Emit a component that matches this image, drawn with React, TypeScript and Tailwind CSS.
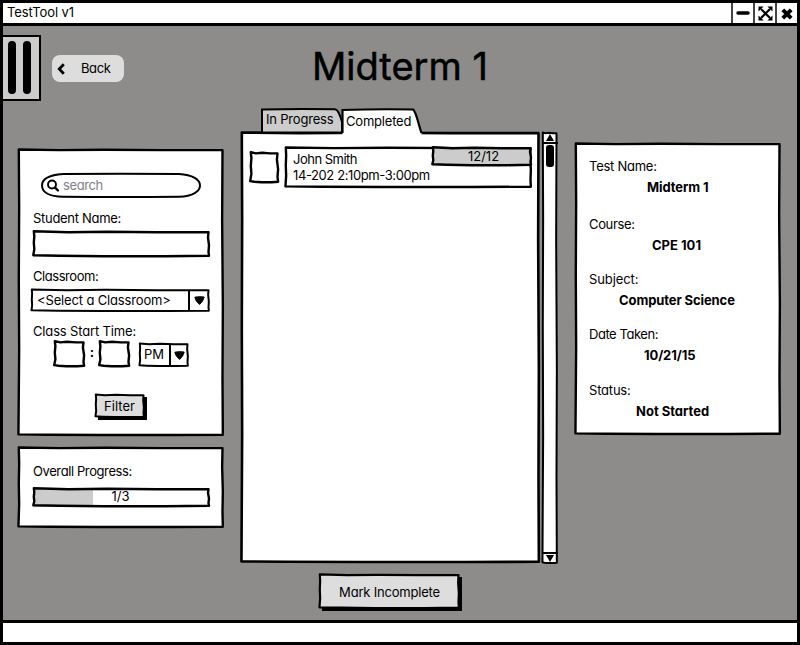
import type { ReactNode } from "react";

type FrameProps = {
  w: number;
  h: number;
  className: string;
  fill?: string;
  stroke?: number;
  wobble?: number;
  shadow?: number;
  children?: ReactNode;
};

/* Hand-drawn rectangle that sits behind its content. */
function Frame({ w, h, className, fill = "#ffffff", stroke = 2.4, wobble = 0.35, shadow = 0, children }: FrameProps) {
  const x = 0.8;
  const y = 0.8;
  const r = w - 1.5;
  const b = h - 1.3;
  const k = wobble;
  const d =
    `M${x} ${y - k} L${w * 0.2} ${y + k} L${w * 0.42} ${y} L${w * 0.7} ${y + k} L${r} ${y + k}` +
    ` L${r - k} ${h * 0.25} L${r + k} ${h * 0.55} L${r} ${h * 0.8} L${r + k} ${b}` +
    ` L${w * 0.75} ${b + k} L${w * 0.4} ${b + k} L${w * 0.15} ${b} L${x - k} ${b - k}` +
    ` L${x + k} ${h * 0.7} L${x} ${h * 0.45} L${x + k} ${h * 0.2} Z`;
  return (
    <div className={`relative isolate shrink-0 ${className}`}>
      <svg className="absolute inset-0 -z-10 overflow-visible" width={w} height={h} aria-hidden="true">
        {shadow > 0 && <rect x={shadow + 1} y={shadow + 1} width={w - 1} height={h - 1} fill="#000" />}
        <path d={d} fill={fill} stroke="#000" strokeWidth={stroke} strokeLinejoin="round" />
      </svg>
      {children}
    </div>
  );
}

function Down() {
  return (
    <svg width="11" height="9" viewBox="0 0 11 9" aria-hidden="true">
      <path d="M.8 1.2 Q5 .2 10.2 1 Q9.400 5 5.700 8.4 Q1.6 5.6 .8 1.2Z" stroke="#000" strokeLinejoin="round" />
    </svg>
  );
}

function Label({ children, tracking = "tracking-[-0.3px]" }: { children: ReactNode; tracking?: string }) {
  return <div className={`h-4 whitespace-nowrap ${tracking}`}>{children}</div>;
}

function Window() {
  return (
    <header className="flex h-[26px] shrink-0 border-t-[3px] border-b-[3px] border-black bg-white">
      <div className="flex-1 pl-1 leading-[19px] tracking-[-0.1px]">TestTool v1</div>
      <div className="flex w-[22px] items-center justify-center border-l-2 border-[#444]">
        <svg width="14" height="4"><path d="M2 2H12" stroke="#000" strokeWidth="3.4" strokeLinecap="round" /></svg>
      </div>
      <div className="flex w-[22px] items-center justify-center border-l-2 border-[#444]">
        <svg width="15" height="15" viewBox="0 0 15 15">
          <path d="M3 3L12 12M12 3L3 12" stroke="#000" strokeWidth="2.2" />
          <path d="M.5 .5H5.6L.5 5.6ZM14.5 .5V5.6L9.4 .5ZM.5 14.5V9.4L5.6 14.5ZM14.5 14.5H9.4L14.5 9.4Z" />
        </svg>
      </div>
      <div className="flex w-[22px] items-center justify-center border-l-2 border-[#444] pt-[2px]">
        <svg width="12" height="12" viewBox="0 0 12 12">
          <path d="M1.800 1.800L10.200 10.200M10.200 1.800L1.800 10.200" stroke="#000" strokeWidth="3.9" />
        </svg>
      </div>
    </header>
  );
}

function Filters() {
  return (
    <Frame w={206} h={287} className="h-[287px] w-[206px] pt-6">
      <div className="ml-[23px] flex h-[26px] w-[160px]">
        <svg className="absolute -z-10 overflow-visible" width="160" height="26" aria-hidden="true">
          <path d="M22 1 Q80 .5 138 1 C152 1.6 159 7 159 12.500 S152 23.500 138 23.800 Q80 24.400 22 23.800 C8 23.500 1 19 1 12.500 S8 2 22 1Z" fill="#fff" stroke="#000" strokeWidth="2" />
        </svg>
        <svg className="mt-[6px] ml-[6px]" width="14" height="14" fill="none" stroke="#000">
          <circle cx="5" cy="5.500" r="4" strokeWidth="1.900" />
          <path d="M8.100 8.700L11 11.500" strokeWidth="2.4" strokeLinecap="round" />
        </svg>
        <span className="ml-[2px] leading-[24px] tracking-[-0.4px] text-[#808088]">search</span>
      </div>
      <div className="mt-[11px] pl-[15px]"><Label>Student Name:</Label></div>
      <Frame w={177} h={26} wobble={0.5} className="mt-[5px] ml-[15px] h-[26px] w-[177px]" />
      <div className="mt-[11px] pl-[15px]"><Label tracking="tracking-[-0.45px]">Classroom:</Label></div>
      <Frame w={179} h={23} stroke={2} className="mt-[5px] ml-[13px] flex h-[23px] w-[179px] items-center">
        <span className="w-[157px] pb-[2px] pl-[6px] tracking-[-0.15px] whitespace-nowrap">&lt;Select a Classroom&gt;</span>
        <span className="flex h-[20px] w-[20px] items-center justify-center border-l-2 border-black pb-px"><Down /></span>
      </Frame>
      <div className="mt-[11px] pl-[15px]"><Label tracking="tracking-[-0.15px]">Class Start Time:</Label></div>
      <div className="mt-[2px] ml-9 flex items-start">
        <Frame w={31} h={26} wobble={0.6} className="h-[26px] w-[31px]" />
        <span className="w-[14px] pt-[3px] text-center font-bold">:</span>
        <Frame w={31} h={26} wobble={0.6} className="h-[26px] w-[31px]" />
        <Frame w={50} h={24} stroke={2} className="mt-[2px] ml-[9px] flex h-6 w-[50px] items-center">
          <span className="w-[30px] pb-[3px] pl-[5px]">PM</span>
          <span className="flex h-[21px] w-[18px] items-center justify-center border-l-2 border-black"><Down /></span>
        </Frame>
      </div>
      <Frame w={50} h={24} fill="#dddddd" stroke={2} shadow={2} className="mt-[27px] ml-[77px] h-6 w-[50px] text-center leading-[24px]">
        <span className="pr-px">Filter</span>
      </Frame>
    </Frame>
  );
}

function Progress() {
  return (
    <Frame w={206} h={81} className="mt-[11px] h-[81px] w-[206px] pt-4">
      <div className="pl-[15px]"><Label tracking="tracking-[-0.4px]">Overall Progress:</Label></div>
      <div className="mt-[9px] ml-[15px] flex w-[177px] bg-[linear-gradient(90deg,#cccccc_60px,#ffffff_60px)]">
        <Frame w={177} h={19} wobble={0.5} fill="none" className="h-[19px] w-[177px] pr-[2px] text-center leading-[17px]">1/3</Frame>
      </div>
    </Frame>
  );
}

function Results() {
  return (
    <div className="flex h-[456px] w-[317px] flex-col">
      <div className="relative isolate z-10 flex h-[26px] pl-5">
        <svg className="absolute top-0 left-0 -z-10 overflow-visible" width="200" height="28" aria-hidden="true">
          <path d="M21 24.500V1.5Q58 .4 94 1.3Q97.500 1.500 101 14V24.500Z" fill="#ccc" stroke="#000" strokeWidth="2" />
          <path d="M101.500 28V2Q137 .8 172 1.500C175 3 177 15 180.500 25V28Z" fill="#fff" />
          <path d="M101.500 25V2Q137 .8 172 1.500C175 3 177 15 180.500 25" fill="none" stroke="#000" strokeWidth="2.200" />
        </svg>
        <span className="w-[81px] pl-[5px] leading-[23px] tracking-[-0.2px] whitespace-nowrap">In Progress</span>
        <span className="pl-[4px] leading-[27px] tracking-[-0.2px]">Completed</span>
      </div>
      <div className="-mt-[2px] flex gap-[2px]">
        <Frame w={299} h={431} stroke={2.6} className="flex h-[431px] w-[299px] items-start pt-[14px] pl-[9px]">
          <Frame w={29} h={31} wobble={0.6} className="mt-[6px] h-[31px] w-[29px]" />
          <Frame w={247} h={41} className="mt-px ml-[6px] flex h-[41px] w-[247px] justify-between">
            <div className="pt-[4px] pl-2 leading-4 whitespace-nowrap">
              <div className="tracking-[-0.5px]">John Smith</div>
              <div className="tracking-[-0.4px]">14-202 2:10pm-3:00pm</div>
            </div>
            <Frame w={100} h={19} fill="#cccccc" wobble={0.5} className="-ml-10 h-[19px] w-[100px] pl-[3px] text-center leading-[18px]">
              12/12
            </Frame>
          </Frame>
        </Frame>
        <Frame w={16} h={432} stroke={2} className="flex h-[432px] w-4 flex-col items-center justify-between py-px">
          <div className="flex w-full flex-col items-center">
            <div className="flex h-[11px] w-full items-center justify-center border-b-2 border-black">
              <svg width="8" height="7"><path d="M4 0L8 7H0Z" /></svg>
            </div>
            <div className="mt-px h-[22px] w-2 rounded-[3px] bg-black" />
          </div>
          <div className="flex h-[11px] w-full items-center justify-center border-t-2 border-black">
            <svg width="8" height="7"><path d="M0 0H8L4 7Z" /></svg>
          </div>
        </Frame>
      </div>
    </div>
  );
}

const details = [
  { label: "Test Name:", value: "Midterm 1", row: "h-[58px]", pad: "pl-[72px] tracking-[-0.1px]", track: "tracking-[-0.25px]" },
  { label: "Course:", value: "CPE 101", row: "h-[55px]", pad: "pl-[77px]", track: "tracking-[-0.35px]" },
  { label: "Subject:", value: "Computer Science", row: "h-[55px]", pad: "pl-[44px] tracking-[-0.1px]", track: "tracking-[-0.1px]" },
  { label: "Date Taken:", value: "10/21/15", row: "h-[56px]", pad: "pl-[69px] tracking-[-0.1px]", track: "tracking-[-0.45px]" },
  { label: "Status:", value: "Not Started", row: "h-[45px]", pad: "pl-[61px]", track: "tracking-[-0.2px]" },
];

function Details() {
  return (
    <Frame w={206} h={292} className="h-[292px] w-[206px] pt-[15px] pl-[14px]">
      {details.map((d) => (
        <div key={d.label} className={d.row}>
          <Label tracking={d.track}>{d.label}</Label>
          <div className={`-ml-px mt-[5px] font-bold whitespace-nowrap ${d.pad}`}>
            <span className="-ml-[13px]">{d.value}</span>
          </div>
        </div>
      ))}
    </Frame>
  );
}

export default function App() {
  return (
    <div className="flex h-[645px] w-[800px] flex-col overflow-hidden border-r-[3px] border-l-[3px] border-black bg-[#8d8c8a] font-['Inter','Liberation_Sans',sans-serif] text-[13px] leading-4 text-black [font-feature-settings:'cv11']">
      <Window />
      <div className="flex h-[82px] shrink-0 pt-[9px]">
        <div className="flex h-[66px] w-[38px] gap-[7px] border-2 border-l-0 border-black bg-[#cccccc] pt-1 pl-[5px]">
          <div className="h-[53px] w-2 rounded-full bg-black" />
          <div className="h-[53px] w-2 rounded-full bg-black" />
        </div>
        <button className="mt-5 ml-[11px] flex h-[27px] w-[72px] items-center rounded-[8px] bg-[#dddddd] pl-[5px]">
          <svg width="8" height="12" fill="none"><path d="M6.800 1.200L2.200 6L6.800 10.800" stroke="#000" strokeWidth="2.700" /></svg>
          <span className="pb-[2px] pl-[16px] tracking-[-0.4px]">Back</span>
        </button>
        <h1 className="mt-[9px] ml-[188px] text-[38px] leading-[44px] whitespace-nowrap [-webkit-text-stroke:0.5px_black]">Midterm 1</h1>
      </div>
      <main className="flex h-[466px] shrink-0 pl-[15px]">
        <div className="flex flex-col pt-[41px]">
          <Filters />
          <Progress />
        </div>
        <div className="ml-[17px]"><Results /></div>
        <div className="ml-[17px] pt-[35px]"><Details /></div>
      </main>
      <div className="flex-1">
        <Frame w={141} h={35} fill="#dddddd" stroke={2.2} shadow={2} className="ml-[316px] h-[35px] w-[141px] text-center leading-[36px] tracking-[-0.2px]">
          Mark Incomplete
        </Frame>
      </div>
      <footer className="h-[25px] shrink-0 border-t-[3px] border-b-[3px] border-black bg-white" />
    </div>
  );
}
